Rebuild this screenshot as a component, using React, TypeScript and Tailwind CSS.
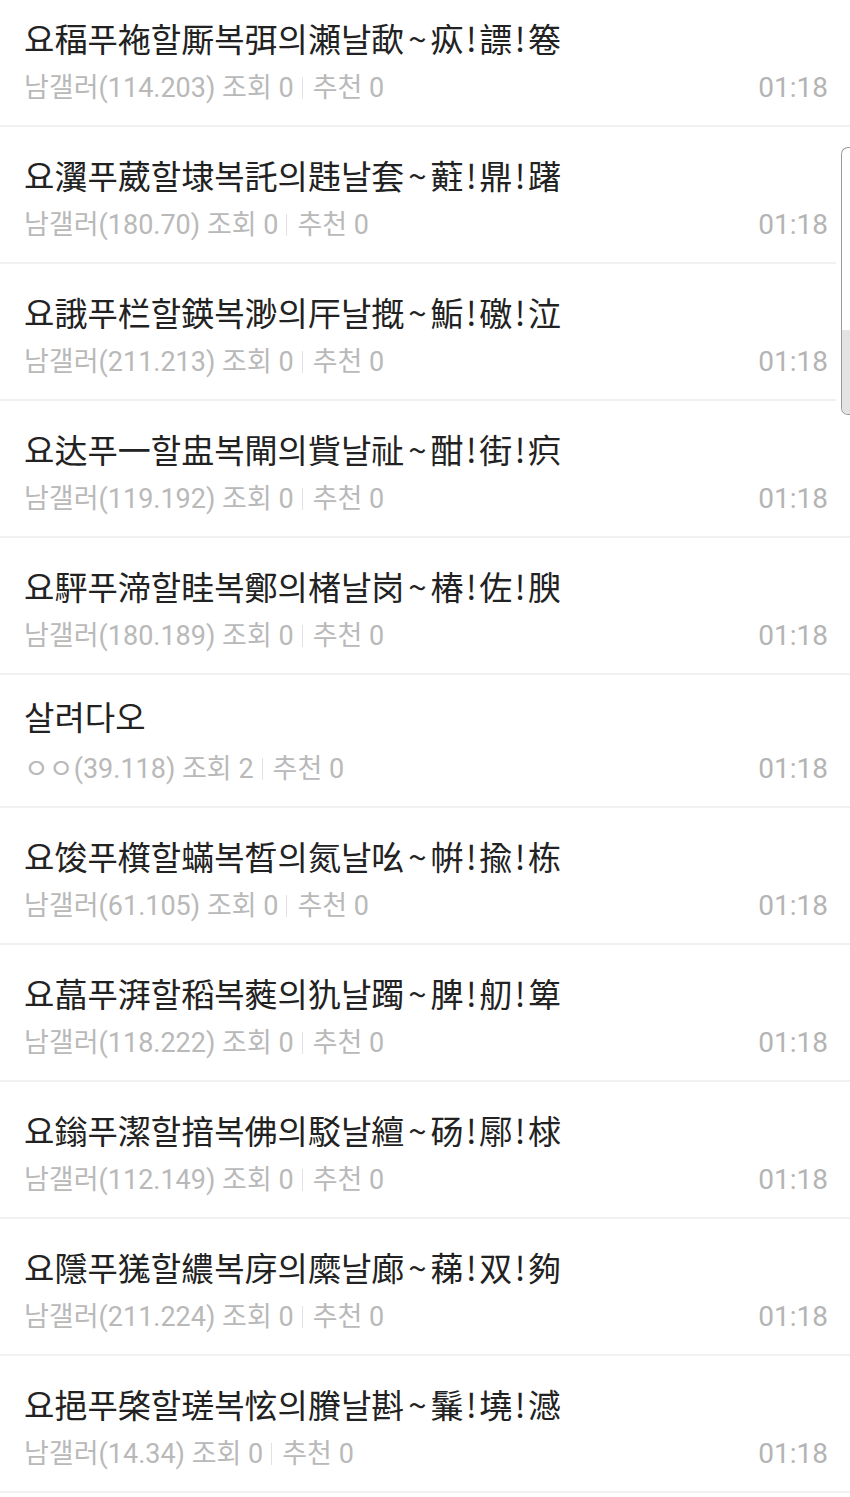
import React from "react";

type Row = { title: string; nick: string; ip: string; views: string; rec: string; special?: boolean };

const rows: Row[] = [
  { title: "요稫푸袘할厮복弭의瀬날歃~疭!謤!箞", nick: "남갤러", ip: "114.203", views: "0", rec: "0" },
  { title: "요瀷푸葳할埭복託의韪날套~蘣!鼎!躇", nick: "남갤러", ip: "180.70", views: "0", rec: "0" },
  { title: "요誐푸栏할鍈복渺의厈날摡~鮜!礉!泣", nick: "남갤러", ip: "211.213", views: "0", rec: "0" },
  { title: "요达푸一할盅복閘의貲날祉~酣!街!疻", nick: "남갤러", ip: "119.192", views: "0", rec: "0" },
  { title: "요駍푸渧할眭복鄭의楮날岗~椿!佐!腴", nick: "남갤러", ip: "180.189", views: "0", rec: "0" },
  { title: "살려다오", nick: "ㅇㅇ", ip: "39.118", views: "2", rec: "0", special: true },
  { title: "요馂푸檱할蟎복晳의氮날吆~帲!揄!栋", nick: "남갤러", ip: "61.105", views: "0", rec: "0" },
  { title: "요蕌푸湃할稻복蕤의犰날躅~脾!舠!箄", nick: "남갤러", ip: "118.222", views: "0", rec: "0" },
  { title: "요鎓푸潔할揞복佛의駁날繵~砀!鄏!梂", nick: "남갤러", ip: "112.149", views: "0", rec: "0" },
  { title: "요隱푸獇할繷복庌의縻날廊~蕛!双!夠", nick: "남갤러", ip: "211.224", views: "0", rec: "0" },
  { title: "요挹푸棨할瑳복怰의賸날斟~鬑!墝!澸", nick: "남갤러", ip: "14.34", views: "0", rec: "0" },
];

function Title({ text }: { text: string }) {
  const parts = Array.from(text);
  return (
    <>
      {parts.map((ch, i) =>
        ch === "~" ? (
          <span key={i} className="mx-[4px]">~</span>
        ) : ch === "!" ? (
          <span key={i} className="mx-[2.5px]">!</span>
        ) : (
          <React.Fragment key={i}>{ch}</React.Fragment>
        )
      )}
    </>
  );
}

function ListRow({ r }: { r: Row }) {
  return (
    <div
      className={
        "flex flex-col border-b-2 border-[#f1f1f1] pl-[24px] pr-[22px] " +
        (r.special ? "h-[133px] pt-[11px]" : "h-[137px] pt-[18px]")
      }
    >
      <div
        className="h-[62px] flex items-center text-[33px] text-[#222222] whitespace-nowrap"
        style={{ fontFamily: "'Noto Sans CJK KR', 'Noto Sans CJK SC', sans-serif" }}
      >
        <Title text={r.title} />
      </div>
      <div
        className={
          "h-[36px] flex items-center justify-between text-[#b9b9b9] whitespace-nowrap " +
          (r.special ? "mt-[3px]" : "")
        }
        style={{ fontFamily: "Roboto, 'Noto Sans CJK KR', sans-serif" }}
      >
        <div className="flex items-center text-[27px]">
          <span>
            {r.nick}({r.ip}) 조회 {r.views}
          </span>
          <span className="ml-[8px] mr-[10px] h-[22px] w-px bg-[#e2e2e2]" />
          <span>추천 {r.rec}</span>
        </div>
        <span className="text-[28px] text-[#b4b4b4]">01:18</span>
      </div>
    </div>
  );
}

export default function App() {
  return (
    <div className="relative w-[850px] h-[1497px] overflow-hidden bg-white">
      <div className="-mt-[10px]">
        {rows.map((r, i) => (
          <ListRow key={i} r={r} />
        ))}
      </div>
      <div className="absolute right-0 top-[147px] w-[14px] h-[268px] bg-white flex justify-end">
        <div className="relative w-[9px] h-full border border-r-0 border-[#9a9a9a] rounded-l-[7px] bg-white overflow-hidden">
          <div className="absolute left-0 right-0 bottom-0 h-[84px] bg-[#e3e3e3]" />
        </div>
      </div>
    </div>
  );
}
